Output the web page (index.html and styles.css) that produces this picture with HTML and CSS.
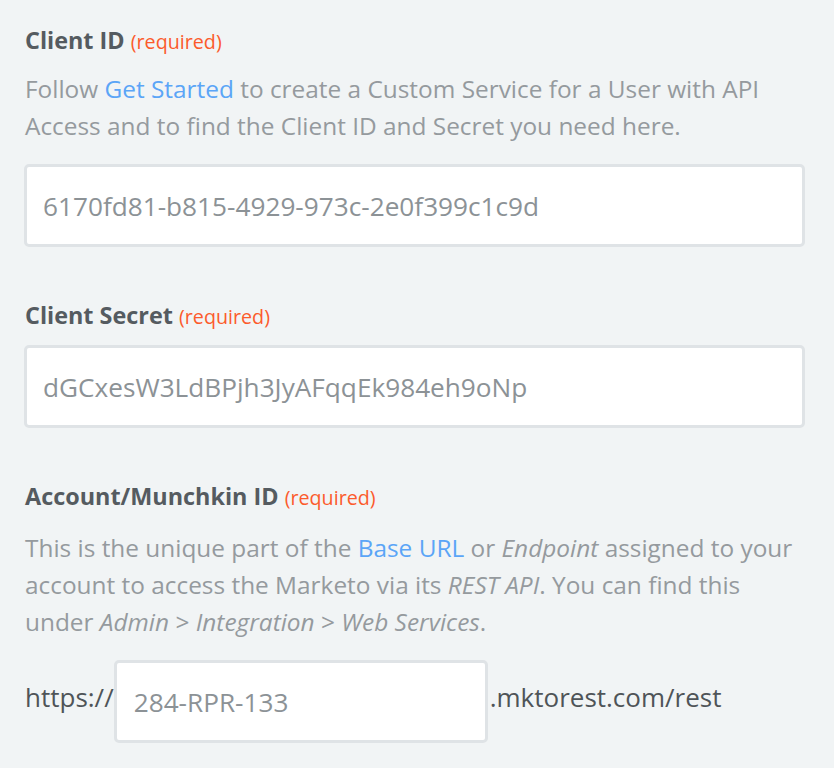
FILE: index.html
```html
<!DOCTYPE html>
<html>
<head>
<meta charset="utf-8">
<link rel="stylesheet" href="styles.css">
</head>
<body>
<div class="form">
  <div class="field">
    <div class="label">Client ID <span class="req">(required)</span></div>
    <p class="help">Follow <a href="#">Get Started</a> to create a Custom Service for a User with API Access and to find the Client ID and Secret you need here.</p>
    <div class="input">6170fd81-b815-4929-973c-2e0f399c1c9d</div>
  </div>
  <div class="field">
    <div class="label">Client Secret <span class="req">(required)</span></div>
    <div class="input">dGCxesW3LdBPjh3JyAFqqEk984eh9oNp</div>
  </div>
  <div class="field">
    <div class="label">Account/Munchkin ID <span class="req">(required)</span></div>
    <p class="help spaced">This is the unique part of the <a href="#">Base URL</a> or <em>Endpoint</em> assigned to your account to access the Marketo via its <em>REST API</em>. You can find this under <em>Admin</em> &gt; <em>Integration</em> &gt; <em>Web Services</em>.</p>
    <div class="url-row">
      <span class="affix">https://</span>
      <div class="input small">284-RPR-133</div>
      <span class="affix">.mktorest.com/rest</span>
    </div>
  </div>
</div>
</body>
</html>
```

FILE: styles.css
```css
html, body {
  margin: 0;
  padding: 0;
  background: #f1f4f5;
}
body {
  font-family: "Open Sans", "Liberation Sans", sans-serif;
  width: 834px;
  height: 768px;
  overflow: hidden;
}
.form {
  padding: 25px 29px 0 24px;
}
.field {
  margin-bottom: 53px;
}
.label {
  font-size: 23.4px;
  font-weight: 700;
  line-height: 30px;
  color: #555b60;
  margin: 0 0 13px 1px;
}
.req {
  font-size: 19.7px;
  font-weight: 400;
  color: #fc5b2c;
}
.help {
  margin: 0 0 20px 1px;
  font-size: 24.4px;
  line-height: 37px;
  color: #959a9e;
}
.help.spaced {
  margin-top: 16px;
}
.help a {
  color: #5ba5f7;
  text-decoration: none;
}
.input {
  box-sizing: border-box;
  height: 83px;
  background: #fff;
  border: 3px solid #dfe3e6;
  border-radius: 5px;
  padding: 0 16px;
  display: flex;
  align-items: center;
  font-size: 26.2px;
  color: #8c9296;
}
.url-row {
  display: flex;
  align-items: center;
}
.affix {
  font-size: 26px;
  color: #4f5458;
  margin-bottom: 10px;
}
.affix:first-child {
  margin-left: 1px;
}
.input.small {
  width: 374px;
  margin: 0 2px 0 0;
  padding-left: 17px;
}
```
